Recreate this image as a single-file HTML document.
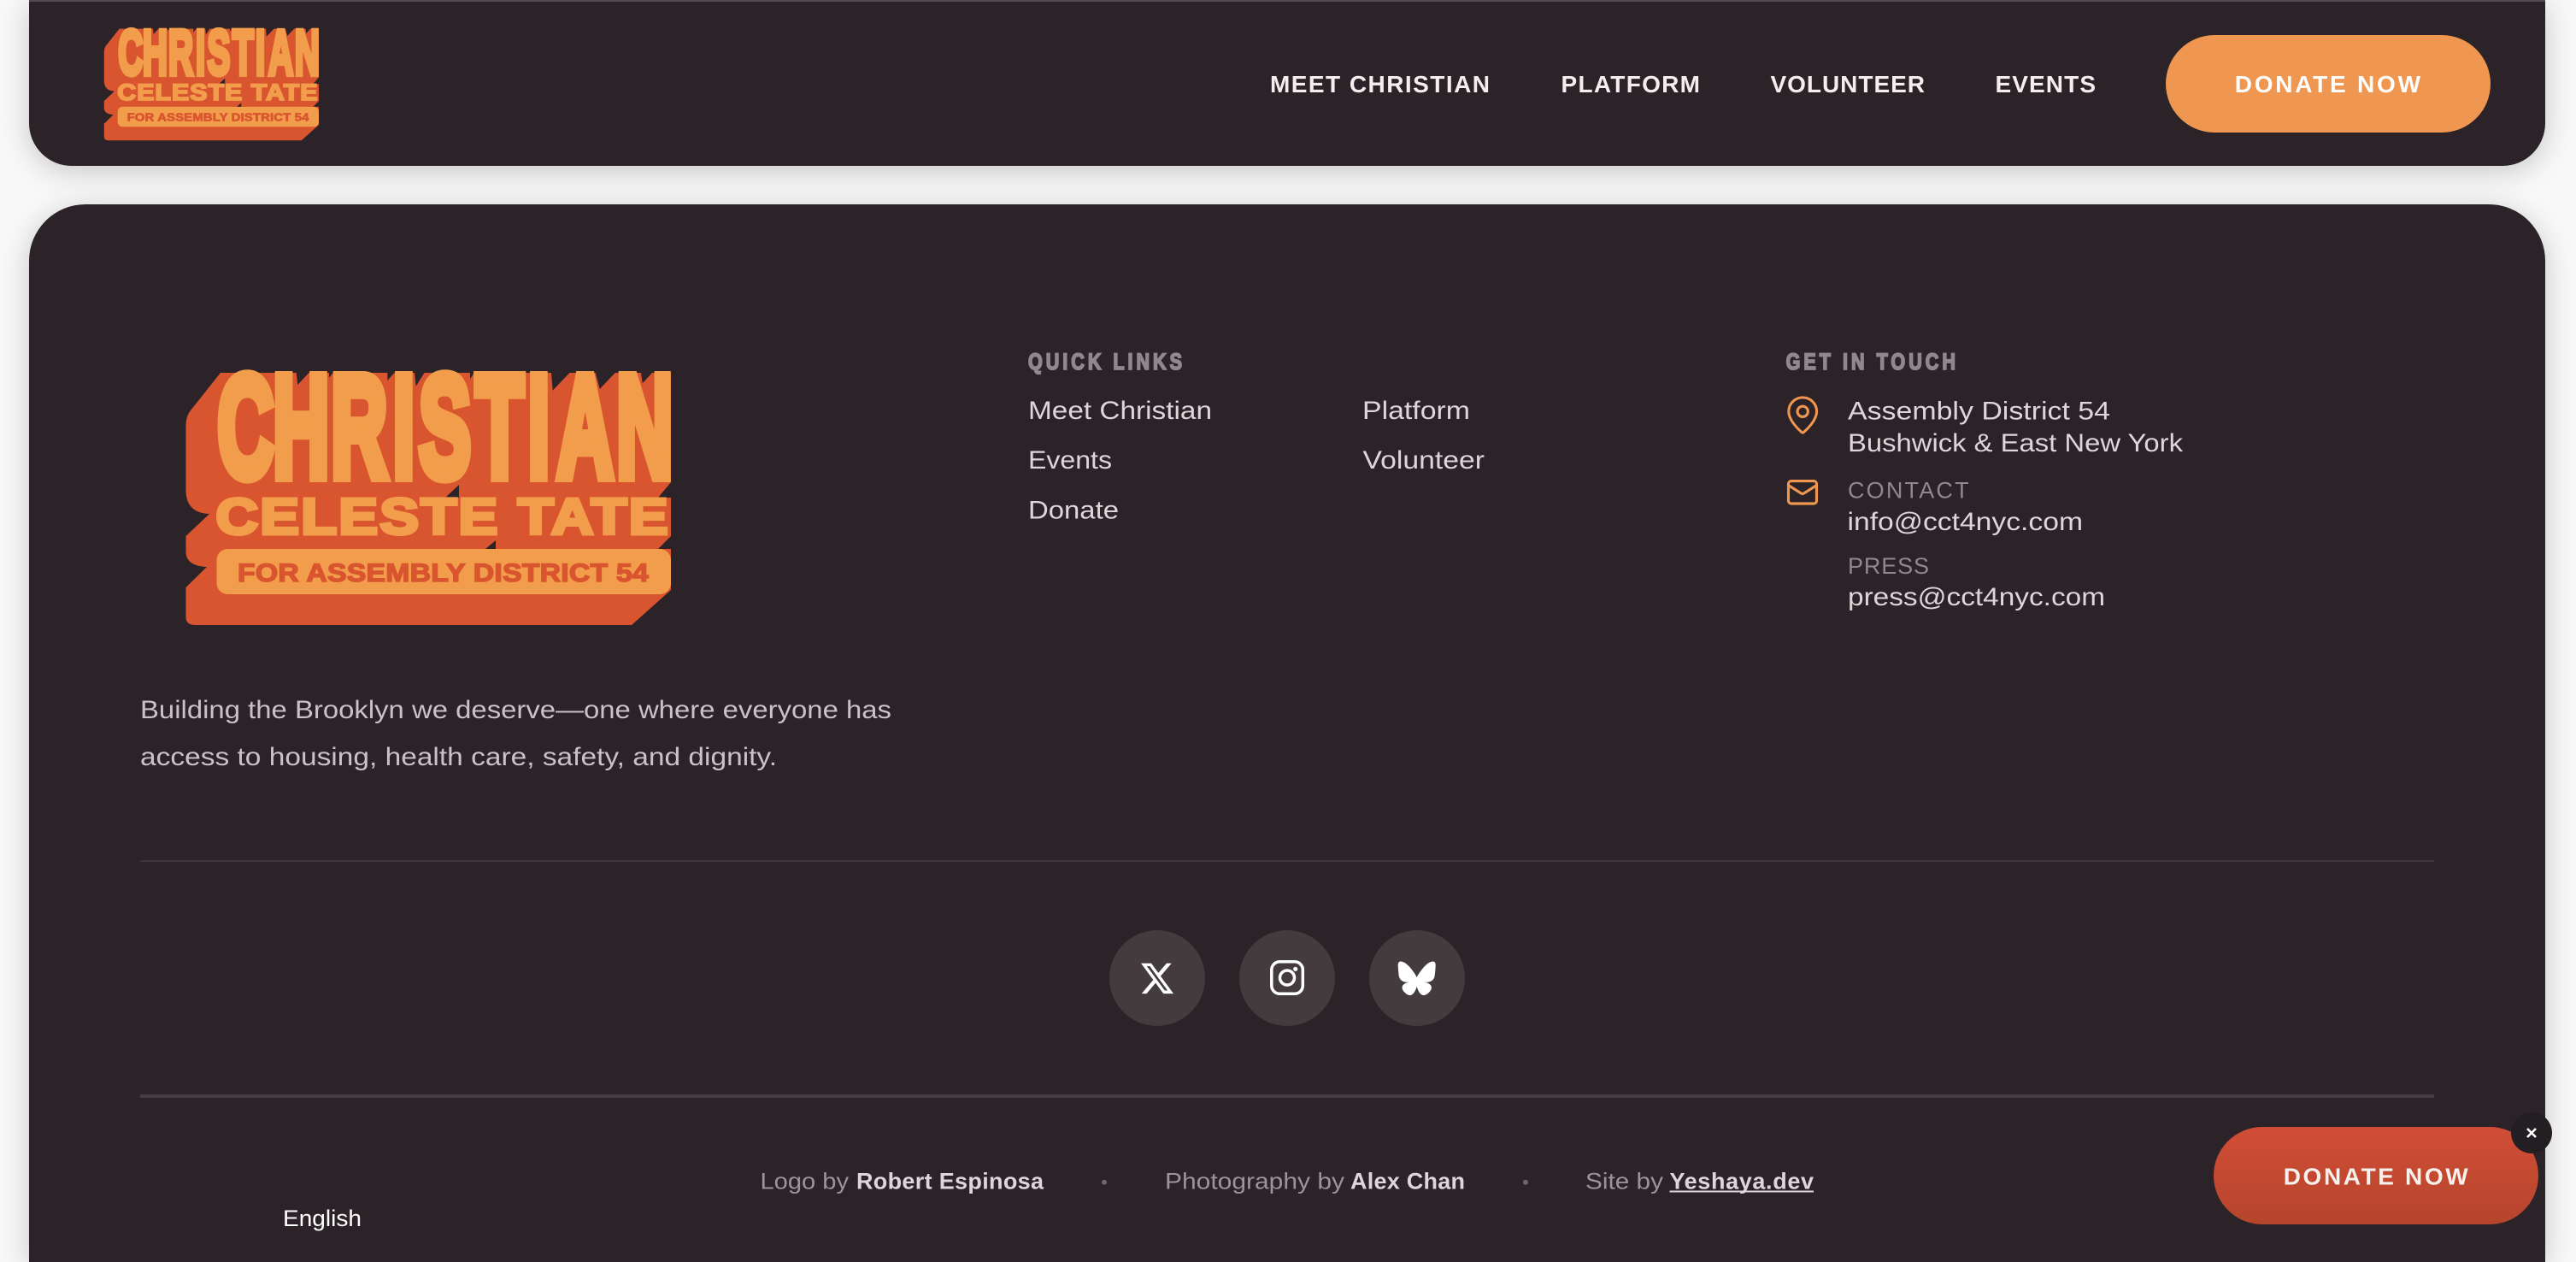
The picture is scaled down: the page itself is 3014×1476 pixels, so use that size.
<!DOCTYPE html>
<html lang="en"><head><meta charset="utf-8"><title>Christian Celeste Tate</title>
<style>
html,body{margin:0;padding:0;width:3014px;height:1476px;overflow:hidden;background:#f8f8f8}
body{position:relative}
.card{position:absolute;background:#2c2328;box-shadow:0 6px 34px rgba(0,0,0,.2)}
#nav{left:34px;top:0;width:2944px;height:194px;border-radius:0 0 50px 50px;border-top:2px solid #514b50;box-sizing:border-box}
#foot{left:34px;top:239px;width:2944px;height:1237px;border-radius:66px 66px 0 0}
svg{position:absolute;left:0;top:0}
text{font-family:"Liberation Sans",sans-serif}
.l{font-size:30px;fill:#dcd7da}
.h{font-size:27px;fill:#8f888d;font-weight:700;stroke:#8f888d;stroke-width:1.8px}
.m{font-size:27px;fill:#8f888d}
.n{font-size:28px;fill:#f3eff0;font-weight:700}
.c{font-size:27px;fill:#9b9498}
.s{font-size:27px;fill:#dcd7da;font-weight:700}
.d{font-size:30px;fill:#c9c2c7}
</style></head><body>
<div class="card" id="nav"></div>
<div class="card" id="foot"></div>
<svg width="3014" height="1476" viewBox="0 0 3014 1476" xmlns="http://www.w3.org/2000/svg">
<defs></defs>

<!-- small logo -->
<g transform="translate(25.5,-159.4) scale(.4427)">
<path fill="#d9552f" d="M258 436L223 480Q217.500 487 217.500 497L217.500 573Q217.500 600 245 601L217.500 627L217.500 645Q217.500 662 242 663L217.500 687L217.500 722Q217.500 731 229 731L739 731L785 690L785 436Z"/>
<g fill="#2c2328"><path d="M346.700 435.700H361.700L348.300 450Z"/><path d="M385 435.700H390L385 441.700Z"/><path d="M453.300 435.700H461.700L453.300 445Z"/><path d="M485 435.700H496.700L486.700 451.700Z"/><path d="M550 435.700H555L550 443Z"/><path d="M645 435.700H666.700L646.700 456.700Z"/><path d="M696.700 435.700H720L701.700 455Z"/><path d="M750 435.700H763.300L751.700 448.300Z"/><path d="M785 564V582H770Z"/><path d="M785 627V642H770Z"/><path d="M537 567V582H521Z"/><path d="M580 632V642H568Z"/></g>
<g fill="#f29d4b" stroke="#f29d4b" stroke-linejoin="miter">
<text transform="translate(253.500,557) scale(.540,1)" font-size="168.600" font-weight="700" stroke-width="14" x="2 122.100 248 382 438.300 561.700 674.600 737.600 866.500">CHRISTIAN</text>
<text transform="translate(252.500,624.700) scale(1.150,1)" font-size="59.600" font-weight="700" stroke-width="4" textLength="460">CELESTE TATE</text>
<rect x="253.500" y="642" width="531.500" height="53" rx="13" stroke="none"/>
<text transform="translate(278,680) scale(1.126,1)" font-size="30" font-weight="700" fill="#d9552f" stroke="#d9552f" stroke-width="1.500" textLength="427">FOR ASSEMBLY DISTRICT 54</text>
</g></g>

<!-- nav links -->
<text class="n" x="1486" y="108" textLength="257">MEET CHRISTIAN</text>
<text class="n" x="1826.500" y="108" textLength="162.500">PLATFORM</text>
<text class="n" x="2071.500" y="108" textLength="180.500">VOLUNTEER</text>
<text class="n" x="2334.500" y="108" textLength="117.500">EVENTS</text>
<rect x="2534" y="41" width="380" height="114" rx="57" fill="#ef9650"/>
<text class="n" x="2614.700" y="108" textLength="217.300" style="fill:#fff">DONATE NOW</text>

<!-- large logo -->
<g>
<path fill="#d9552f" d="M258 436L223 480Q217.500 487 217.500 497L217.500 573Q217.500 600 245 601L217.500 627L217.500 645Q217.500 662 242 663L217.500 687L217.500 722Q217.500 731 229 731L739 731L785 690L785 436Z"/>
<g fill="#2c2328"><path d="M346.700 435.700H361.700L348.300 450Z"/><path d="M385 435.700H390L385 441.700Z"/><path d="M453.300 435.700H461.700L453.300 445Z"/><path d="M485 435.700H496.700L486.700 451.700Z"/><path d="M550 435.700H555L550 443Z"/><path d="M645 435.700H666.700L646.700 456.700Z"/><path d="M696.700 435.700H720L701.700 455Z"/><path d="M750 435.700H763.300L751.700 448.300Z"/><path d="M785 564V582H770Z"/><path d="M785 627V642H770Z"/><path d="M537 567V582H521Z"/><path d="M580 632V642H568Z"/></g>
<g fill="#f29d4b" stroke="#f29d4b" stroke-linejoin="miter">
<text transform="translate(253.500,557) scale(.540,1)" font-size="168.600" font-weight="700" stroke-width="14" x="2 122.100 248 382 438.300 561.700 674.600 737.600 866.500">CHRISTIAN</text>
<text transform="translate(252.500,624.700) scale(1.150,1)" font-size="59.600" font-weight="700" stroke-width="4" textLength="460">CELESTE TATE</text>
<rect x="253.500" y="642" width="531.500" height="53" rx="13" stroke="none"/>
<text transform="translate(278,680) scale(1.126,1)" font-size="30" font-weight="700" fill="#d9552f" stroke="#d9552f" stroke-width="1.500" textLength="427">FOR ASSEMBLY DISTRICT 54</text>
</g></g>

<!-- description -->
<text class="d" x="164" y="840" textLength="879" lengthAdjust="spacingAndGlyphs">Building the Brooklyn we deserve—one where everyone has</text>
<text class="d" x="164" y="895" textLength="745" lengthAdjust="spacingAndGlyphs">access to housing, health care, safety, and dignity.</text>

<!-- quick links -->
<text class="h" transform="translate(1203,432) scale(.8,1)" textLength="225">QUICK LINKS</text>
<text class="l" x="1203" y="490" textLength="215" lengthAdjust="spacingAndGlyphs">Meet Christian</text>
<text class="l" x="1594" y="490" textLength="126" lengthAdjust="spacingAndGlyphs">Platform</text>
<text class="l" x="1203" y="548" textLength="98" lengthAdjust="spacingAndGlyphs">Events</text>
<text class="l" x="1594.500" y="548" textLength="142.500" lengthAdjust="spacingAndGlyphs">Volunteer</text>
<text class="l" x="1203" y="606.500" textLength="106" lengthAdjust="spacingAndGlyphs">Donate</text>

<!-- contact -->
<text class="h" transform="translate(2089.600,432) scale(.8,1)" textLength="248">GET IN TOUCH</text>
<text class="l" x="2162" y="490.500" textLength="307" lengthAdjust="spacingAndGlyphs">Assembly District 54</text>
<text class="l" x="2162" y="528" textLength="392" lengthAdjust="spacingAndGlyphs">Bushwick &amp; East New York</text>
<text class="m" x="2162" y="582.500" textLength="141.600">CONTACT</text>
<text class="l" x="2161.500" y="620" textLength="275.500" lengthAdjust="spacingAndGlyphs">info@cct4nyc.com</text>
<text class="m" x="2162" y="671" textLength="95">PRESS</text>
<text class="l" x="2162" y="708" textLength="301" lengthAdjust="spacingAndGlyphs">press@cct4nyc.com</text>
<g transform="translate(2084.600,460.800) scale(2.050)" fill="none" stroke="#ef9650" stroke-width="1.500" stroke-linecap="round" stroke-linejoin="round"><path d="M20 10c0 4.993-5.539 10.193-7.399 11.799a1 1 0 0 1-1.202 0C9.539 20.193 4 14.993 4 10a8 8 0 0 1 16 0"/><circle cx="12" cy="10" r="3"/></g>
<g transform="translate(2089.200,556) scale(1.650)" fill="none" stroke="#ef9650" stroke-width="1.900" stroke-linecap="round" stroke-linejoin="round"><rect x="2" y="4" width="20" height="16" rx="2"/><path d="m22 7-8.970 5.700a1.940 1.940 0 0 1-2.060 0L2 7"/></g>

<!-- separators -->
<rect x="164" y="1006" width="2684" height="2" fill="#3f363b"/>
<rect x="164" y="1280" width="2684" height="4" fill="#453d41"/>

<!-- social -->
<circle cx="1354" cy="1144" r="56" fill="#433b3e"/>
<circle cx="1506" cy="1144" r="56" fill="#433b3e"/>
<circle cx="1658" cy="1144" r="56" fill="#433b3e"/>
<path transform="translate(1332.800,1122.500) scale(1.760,1.820)" fill="#fff" d="M18.244 2.250h3.308l-7.227 8.260 8.502 11.240H16.170l-5.214-6.817L4.990 21.750H1.680l7.730-8.835L1.254 2.250H8.080l4.713 6.231zm-1.161 17.520h1.833L7.084 4.126H5.117z"/>
<rect x="1487.800" y="1124.800" width="36.500" height="37.500" rx="9.500" fill="none" stroke="#fff" stroke-width="3.500"/>
<circle cx="1506" cy="1143.500" r="8.500" fill="none" stroke="#fff" stroke-width="3.500"/>
<circle cx="1515.700" cy="1133.300" r="2.600" fill="#fff"/>
<path transform="translate(1635.700,1124.500) scale(.0775,.079)" fill="#fff" d="M123.121 33.664C188.241 82.553 258.281 181.680 284 234.873c25.719-53.192 95.759-152.320 160.879-201.210C491.866-1.611 568-28.906 568 57.947c0 17.346-9.945 145.713-15.778 166.555-20.275 72.453-94.155 90.933-159.875 79.748C507.222 323.800 536.444 388.560 473.333 453.320c-119.860 122.992-172.272-30.859-185.702-70.281-2.462-7.227-3.614-10.608-3.631-7.733-.017-2.875-1.169.506-3.631 7.733-13.430 39.422-65.842 193.273-185.702 70.281-63.111-64.760-33.890-129.520 80.986-149.071-65.720 11.185-139.600-7.295-159.875-79.748C9.945 203.659 0 75.291 0 57.946 0-28.906 76.135-1.612 123.121 33.664Z"/>

<!-- credits -->
<text class="c" x="889.500" y="1390.500" textLength="103.500" lengthAdjust="spacingAndGlyphs">Logo by</text>
<text class="s" x="1002" y="1390.500" textLength="219">Robert Espinosa</text>
<circle cx="1292" cy="1382.700" r="3" fill="#6e666b"/>
<text class="c" x="1363" y="1390.500" textLength="210" lengthAdjust="spacingAndGlyphs">Photography by</text>
<text class="s" x="1580" y="1390.500" textLength="134">Alex Chan</text>
<circle cx="1785" cy="1382.700" r="3" fill="#6e666b"/>
<text class="c" x="1855" y="1390.500" textLength="91" lengthAdjust="spacingAndGlyphs">Site by</text>
<text class="s" x="1953.500" y="1390.500" textLength="168.500">Yeshaya.dev</text>
<rect x="1953.500" y="1392.500" width="168.500" height="2" fill="#dcd7da"/>
<text x="331" y="1434" font-size="27" fill="#fff" textLength="92" lengthAdjust="spacingAndGlyphs">English</text>

<!-- floating donate -->
<defs><linearGradient id="g" x1="0" y1="0" x2="0" y2="1"><stop offset="0" stop-color="#d24d36"/><stop offset="1" stop-color="#b5452c"/></linearGradient></defs>
<rect x="2590" y="1318" width="380" height="114" rx="57" fill="url(#g)"/>
<text x="2671.700" y="1385.700" font-size="28" font-weight="700" fill="#f7f1ee" textLength="216">DONATE NOW</text>
<circle cx="2962" cy="1325" r="24" fill="#231e21"/>
<path d="M2957 1320L2967 1330M2967 1320L2957 1330" stroke="#fff" stroke-width="2.600" fill="none"/>
</svg>
</body></html>
